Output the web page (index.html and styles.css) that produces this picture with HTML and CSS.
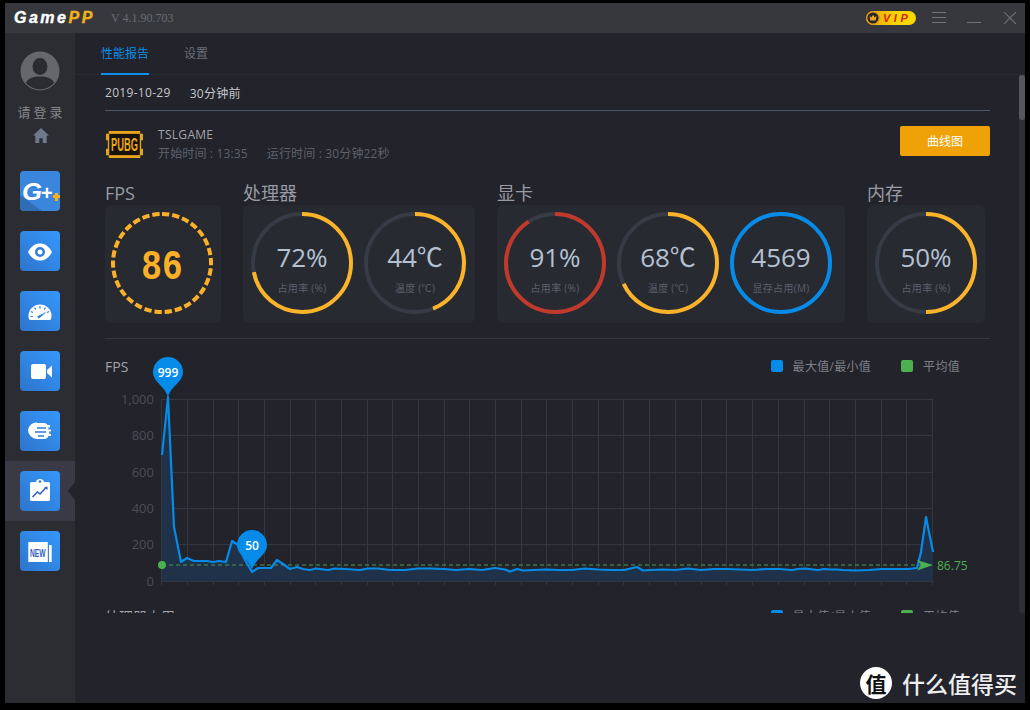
FILE: index.html
```html
<!DOCTYPE html>
<html lang="zh">
<head>
<meta charset="utf-8">
<title>GamePP</title>
<link rel="stylesheet" href="styles.css">
</head>
<body>
<div class="window">
  <header class="titlebar">
    <div class="logo">Game<span class="logo-pp">PP</span></div>
    <div class="version">V 4.1.90.703</div>
    <div class="title-actions">
      <div class="vip">
        <svg class="vip-crown" viewBox="0 0 14 14"><circle cx="7" cy="7" r="6.200" fill="#26262c" stroke="#e8a313" stroke-width="1.200"/><path d="M3.600 4.800l1.800 1.600L7 3.800l1.600 2.600 1.800-1.600-.7 4.600H4.300z" fill="#f2a91a"/></svg>
        <span class="vip-text">VIP</span>
      </div>
      <svg class="ctl ctl-menu" viewBox="0 0 14 12"><path d="M0 .5h14M0 5.500h14M0 10.500h14" stroke="#70737c" fill="none"/></svg>
      <svg class="ctl ctl-min" viewBox="0 0 14 12"><path d="M0 10.500h14" stroke="#70737c" fill="none"/></svg>
      <svg class="ctl ctl-close" viewBox="0 0 12 12"><path d="M0 0l12 12M12 0L0 12" stroke="#70737c" stroke-width="1.100" fill="none"/></svg>
    </div>
  </header>
  <div class="body">
    <aside class="sidebar">
      <div class="user">
        <svg class="avatar" viewBox="0 0 40 40"><defs><clipPath id="av"><circle cx="20" cy="20" r="18.500"/></clipPath></defs><circle cx="20" cy="20" r="19.500" fill="#66676b"/><g clip-path="url(#av)" fill="#2b2c31"><ellipse cx="20" cy="15.500" rx="7.500" ry="8.500"/><path d="M5 36c0-8 7-10.500 15-10.500S35 28 35 36v4H5z"/></g></svg>
        <div class="login">请登录</div>
        <svg class="home" viewBox="0 0 16 15"><path d="M8 0L0 7.500h2.300V15h4v-4.800h3.400V15h4V7.500H16z" fill="#6e7a8c"/></svg>
      </div>
      <nav class="nav">
        <div class="nav-row"><div class="nav-icon nav-icon-g">
          <svg viewBox="0 0 40 40"><path d="M0 24L22 40H4a4 4 0 0 1-4-4z" fill="#2f6db5"/><text class="nav-g" x="2" y="29" textLength="20" lengthAdjust="spacingAndGlyphs">G</text><text class="nav-plus" x="21" y="29">+</text><path d="M35 22h3v2h2v3h-2v3h-3v-3h-2v-3h2z" fill="#f7b21b"/></svg>
        </div></div>
        <div class="nav-row"><div class="nav-icon">
          <svg viewBox="0 0 40 40"><path d="M8 21c3-6 7.500-8.500 12-8.500S29 15 32 21c-3 6-7.500 8.500-12 8.500S11 27 8 21z" fill="#fff"/><circle cx="20" cy="21" r="5" fill="#2d7fdc"/><circle cx="20" cy="21" r="2.500" fill="#fff"/></svg>
        </div></div>
        <div class="nav-row"><div class="nav-icon">
          <svg viewBox="0 0 40 40"><path d="M8.500 25a11.500 11.500 0 0 1 23 0c0 2-.5 4-2 4h-19c-1.500 0-2-2-2-4z" fill="#fff"/><path d="M20 15v2.500M14.500 16.500l1.200 2M25.500 16.500l-1.200 2M10.800 20.500l2.200 1M29.200 20.500l-2.200 1M10.500 25.500h2.500" stroke="#2d7fdc" stroke-width="1.200"/><path d="M17 25.500l10-5-8 7z" fill="#2d7fdc"/></svg>
        </div></div>
        <div class="nav-row"><div class="nav-icon">
          <svg viewBox="0 0 40 40"><rect x="11" y="13" width="15" height="15" rx="2" fill="#fff"/><path d="M27 19l5-4.500v12L27 22z" fill="#fff"/></svg>
        </div></div>
        <div class="nav-row"><div class="nav-icon">
          <svg viewBox="0 0 40 40"><path d="M17 12h7a4 4 0 0 1 3.500 2H30v2.500h-2l.5 2H31v2h-2l.5 2.500H31v2h-2.500a4 4 0 0 1-3.500 3h-8a9 9 0 0 1-9-9 8.500 8.500 0 0 1 9-7.500z" fill="#fff"/><path d="M17 17h9M15 21h11M18 25h6" stroke="#2d7fdc" stroke-width="1.300"/></svg>
        </div></div>
        <div class="nav-row nav-row-active"><div class="nav-icon">
          <svg viewBox="0 0 40 40"><rect x="10" y="11" width="20" height="19" rx="1.500" fill="#fff"/><path d="M16 11.500c0-2 1.500-3.500 4-3.500s4 1.500 4 3.500v1.500h-8z" fill="#fff"/><circle cx="20" cy="10.500" r="1.300" fill="#2d7fdc"/><path d="M12.500 26l5-5 2.500 2 6-6.500" stroke="#2f5fc0" stroke-width="1.500" fill="none"/><path d="M27.500 15.500v3.500l-3.300-2.700z" fill="#2f5fc0"/></svg>
        </div><span class="nav-notch"></span></div>
        <div class="nav-row"><div class="nav-icon">
          <svg viewBox="0 0 40 40"><rect x="8.300" y="11" width="19.500" height="20" fill="#fff"/><rect x="29" y="14" width="2.700" height="17" fill="#fff"/><text class="nav-new" x="10" y="25.500" textLength="15.500" lengthAdjust="spacingAndGlyphs">NEW</text></svg>
        </div></div>
      </nav>
    </aside>
    <main class="main">
      <div class="tabs">
        <div class="tab tab-active">性能报告</div>
        <div class="tab">设置</div>
      </div>
      <div class="scroll-wrap">
        <div class="content">
          <div class="date-row"><span>2019-10-29</span><span>30分钟前</span></div>
          <div class="game-row">
            <svg class="pubg" viewBox="0 0 40 29">
              <path d="M3 0h34v3h3v7h-2v9h2v7h-3v3H3v-3H0v-7h2v-9H0V3h3z" fill="#e6a51e"/>
              <rect x="3.500" y="3" width="33" height="23" fill="#17130a"/>
              <text class="pubg-text" x="5.500" y="22" textLength="29" lengthAdjust="spacingAndGlyphs">PUBG</text>
            </svg>
            <div class="game-info">
              <div class="game-name">TSLGAME</div>
              <div class="game-meta"><span>开始时间 : 13:35</span><span>运行时间 : 30分钟22秒</span></div>
            </div>
            <button class="btn-curve">曲线图</button>
          </div>
          <div class="stats">
            <section class="stat stat-fps">
              <h2 class="stat-title">FPS</h2>
              <div class="card">
                <div class="ring">
                  <svg viewBox="0 0 102 102"><circle class="ring-dash" cx="51" cy="51" r="49"/></svg>
                  <div class="ring-fps">86</div>
                </div>
              </div>
            </section>
            <section class="stat stat-cpu">
              <h2 class="stat-title">处理器</h2>
              <div class="card">
                <div class="ring">
                  <svg viewBox="0 0 102 102"><circle class="ring-track" cx="51" cy="51" r="49"/><circle class="ring-bar bar-amber" cx="51" cy="51" r="49" pathLength="100" stroke-dasharray="72 100"/></svg>
                  <div class="ring-text"><div class="ring-value">72%</div><div class="ring-label">占用率 (%)</div></div>
                </div>
                <div class="ring">
                  <svg viewBox="0 0 102 102"><circle class="ring-track" cx="51" cy="51" r="49"/><circle class="ring-bar bar-amber" cx="51" cy="51" r="49" pathLength="100" stroke-dasharray="44 100"/></svg>
                  <div class="ring-text"><div class="ring-value">44℃</div><div class="ring-label">温度 (℃)</div></div>
                </div>
              </div>
            </section>
            <section class="stat stat-gpu">
              <h2 class="stat-title">显卡</h2>
              <div class="card">
                <div class="ring">
                  <svg viewBox="0 0 102 102"><circle class="ring-track" cx="51" cy="51" r="49"/><circle class="ring-bar bar-red" cx="51" cy="51" r="49" pathLength="100" stroke-dasharray="91 100"/></svg>
                  <div class="ring-text"><div class="ring-value">91%</div><div class="ring-label">占用率 (%)</div></div>
                </div>
                <div class="ring">
                  <svg viewBox="0 0 102 102"><circle class="ring-track" cx="51" cy="51" r="49"/><circle class="ring-bar bar-amber" cx="51" cy="51" r="49" pathLength="100" stroke-dasharray="68 100"/></svg>
                  <div class="ring-text"><div class="ring-value">68℃</div><div class="ring-label">温度 (℃)</div></div>
                </div>
                <div class="ring">
                  <svg viewBox="0 0 102 102"><circle class="ring-track" cx="51" cy="51" r="49"/><circle class="ring-bar bar-blue" cx="51" cy="51" r="49" pathLength="100" stroke-dasharray="100 100"/></svg>
                  <div class="ring-text"><div class="ring-value">4569</div><div class="ring-label">显存占用(M)</div></div>
                </div>
              </div>
            </section>
            <section class="stat stat-mem">
              <h2 class="stat-title">内存</h2>
              <div class="card">
                <div class="ring">
                  <svg viewBox="0 0 102 102"><circle class="ring-track" cx="51" cy="51" r="49"/><circle class="ring-bar bar-amber" cx="51" cy="51" r="49" pathLength="100" stroke-dasharray="50 100"/></svg>
                  <div class="ring-text"><div class="ring-value">50%</div><div class="ring-label">占用率 (%)</div></div>
                </div>
              </div>
            </section>
          </div>
          <div class="divider"></div>
          <section class="chart">
            <div class="chart-head">
              <div class="chart-title">FPS</div>
              <div class="legend">
                <div class="legend-item"><i class="sw sw-blue"></i>最大值/最小值</div>
                <div class="legend-item"><i class="sw sw-green"></i>平均值</div>
              </div>
            </div>
            <svg class="chart-svg" viewBox="105 357 885 250">
              <path class="grid" d="M161.500 399V585M187.500 399V585M213.500 399V585M238.500 399V585M264.500 399V585M290.500 399V585M315.500 399V585M341.500 399V585M367.500 399V585M392.500 399V585M418.500 399V585M444.500 399V585M469.500 399V585M495.500 399V585M521.500 399V585M546.500 399V585M572.500 399V585M598.500 399V585M623.500 399V585M649.500 399V585M675.500 399V585M701.500 399V585M726.500 399V585M752.500 399V585M778.500 399V585M804.500 399V585M829.500 399V585M855.500 399V585M881.500 399V585M906.500 399V585M932.500 399V585M161 399.500H933M161 435.500H933M161 472.500H933M161 508.500H933M161 544.500H933M161 581.500H933"/>
              <text class="y-label" x="154" y="404">1,000</text>
              <text class="y-label" x="154" y="440">800</text>
              <text class="y-label" x="154" y="477">600</text>
              <text class="y-label" x="154" y="513">400</text>
              <text class="y-label" x="154" y="549">200</text>
              <text class="y-label" x="154" y="586">0</text>
              <path class="area" d="M162 581V455L168 397L174 527L181 562L187 558L194 561L207 561L213 562L219 561L226 562L232 541L238 545L245 560L252 572L258 568L271 568L277 560L283 564L290 569L297 567L303 569L310 570L316 568.500L328 570L335 568.500L345 569L360 570L368 568.500L378 568.500L390 570L405 570L418 568.500L431 568.500L444 569L456 570L469 569L482 570L495 568L505 569.500L510 571.500L517 569L523 570.500L534 570L546 569.500L559 570L572 570L585 568.500L598 569.500L611 570L624 570L637 567L643 570.500L650 570L663 569.500L675 570L688 568.500L701 570L714 569L727 569L740 569.500L753 570L766 569L779 569L792 570L798 569L805 568.500L818 570L824 569L831 569.500L837 569.500L843 570L856 570.500L869 570L882 569L895 569L908 569L917 568L921 552L926 517L933 552V581Z"/>
              <path class="avg" d="M162 565H932"/>
              <path class="line" d="M162 455L168 397L174 527L181 562L187 558L194 561L207 561L213 562L219 561L226 562L232 541L238 545L245 560L252 572L258 568L271 568L277 560L283 564L290 569L297 567L303 569L310 570L316 568.500L328 570L335 568.500L345 569L360 570L368 568.500L378 568.500L390 570L405 570L418 568.500L431 568.500L444 569L456 570L469 569L482 570L495 568L505 569.500L510 571.500L517 569L523 570.500L534 570L546 569.500L559 570L572 570L585 568.500L598 569.500L611 570L624 570L637 567L643 570.500L650 570L663 569.500L675 570L688 568.500L701 570L714 569L727 569L740 569.500L753 570L766 569L779 569L792 570L798 569L805 568.500L818 570L824 569L831 569.500L837 569.500L843 570L856 570.500L869 570L882 569L895 569L908 569L917 568L921 552L926 517L933 552"/>
              <circle class="avg-dot" cx="162" cy="565" r="4"/>
              <path class="avg-dot" d="M917 560L933 565L917 570.500L921 565Z"/>
              <text class="avg-label" x="937" y="570">86.75</text>
              <path class="pin" d="M168 397C165 386 153 382 153 372a15 15 0 0 1 30 0C183 382 171 386 168 397Z"/>
              <text class="pin-text" x="168" y="377">999</text>
              <path class="pin" d="M252 570C249 559 237 555 237 545a15 15 0 0 1 30 0C267 555 255 559 252 570Z"/>
              <text class="pin-text" x="252" y="550">50</text>
            </svg>
          </section>
          <section class="chart">
            <div class="chart-head">
              <div class="chart-title">处理器占用</div>
              <div class="legend">
                <div class="legend-item"><i class="sw sw-blue"></i>最大值/最小值</div>
                <div class="legend-item"><i class="sw sw-green"></i>平均值</div>
              </div>
            </div>
          </section>
        </div>
        <div class="scrollbar"><div class="scroll-thumb"></div></div>
      </div>
    </main>
  </div>
  <div class="watermark">
    <span class="wm-badge">值</span>
    <span class="wm-text">什么值得买</span>
  </div>
</div>
</body>
</html>
```

FILE: styles.css
```css
* { box-sizing: border-box; }
html, body { margin: 0; padding: 0; height: 100%; background: #000; overflow: hidden; }
body {
  padding: 3px 5px;
  font-family: "Open Sans", "Noto Sans CJK SC", sans-serif;
  color: #c5c7cc;
}
.window {
  position: relative;
  width: 1020px;
  height: 700px;
  display: flex;
  flex-direction: column;
  background: #22232b;
}

/* title bar */
.titlebar {
  height: 30px;
  flex: none;
  display: flex;
  align-items: center;
  padding-left: 9px;
  background: #36383e;
}
.logo {
  width: 97px;
  font: italic 700 16px "Liberation Sans", sans-serif;
  letter-spacing: 2.500px;
  -webkit-text-stroke: .4px currentColor;
  color: #fff;
}
.logo-pp { color: #f4b01e; }
.version {
  font: 12px "Liberation Serif", serif;
  color: #686c75;
}
.title-actions {
  margin-left: auto;
  display: flex;
  align-items: center;
  padding-right: 9px;
}
.vip {
  width: 50px;
  height: 14px;
  border-radius: 7px;
  display: flex;
  align-items: center;
  background: linear-gradient(90deg, #e89a10, #f5d800 60%);
}
.vip-crown { width: 14px; height: 14px; flex: none; }
.vip-text {
  margin-left: 3px;
  font: italic 700 11px "Liberation Sans", sans-serif;
  letter-spacing: 3.500px;
  color: #d8231a;
}
.ctl { flex: none; }
.ctl-menu { width: 14px; height: 12px; margin-left: 16px; }
.ctl-min { width: 14px; height: 12px; margin-left: 21px; }
.ctl-close { width: 12px; height: 12px; margin-left: 23px; }

.body { flex: 1; display: flex; min-height: 0; }

/* sidebar */
.sidebar { width: 70px; flex: none; background: #2c2d33; }
.user {
  height: 128px;
  padding-top: 18px;
  display: flex;
  flex-direction: column;
  align-items: center;
}
.avatar { width: 40px; height: 40px; display: block; }
.login {
  margin-top: 12px;
  font-size: 13px;
  line-height: 18px;
  letter-spacing: 3px;
  padding-left: 3px;
  color: #85878d;
}
.home { width: 16px; height: 15px; margin: 7px 0 0 1px; display: block; }
.nav-row {
  position: relative;
  height: 60px;
  display: flex;
  align-items: center;
  justify-content: center;
}
.nav-row-active { background: #3a3a46; }
.nav-notch {
  position: absolute;
  right: 0;
  top: 21px;
  border-style: solid;
  border-width: 9px 7px 9px 0;
  border-color: transparent #22232b transparent transparent;
}
.nav-icon {
  width: 40px;
  height: 40px;
  border-radius: 4px;
  overflow: hidden;
  background: linear-gradient(45deg, #2d75cc, #3597fb);
}
.nav-icon svg { display: block; width: 40px; height: 40px; }
.nav-icon-g { background: #3a86dc; }
.nav-g { font: italic 700 23px "Liberation Sans", sans-serif; fill: #fff; }
.nav-plus { font: 700 20px "Liberation Sans", sans-serif; fill: #fff; }
.nav-new { font: 700 11px "Liberation Sans", sans-serif; fill: #2f5fc0; }

/* main */
.main { flex: 1; min-width: 0; display: flex; flex-direction: column; }
.tabs {
  height: 42px;
  flex: none;
  display: flex;
  gap: 35px;
  padding-left: 26px;
  border-bottom: 1px solid #2a2b33;
}
.tab {
  height: 42px;
  padding-top: 11px;
  font-size: 12px;
  line-height: 20px;
  color: #6c6f78;
}
.tab-active { color: #0c8fe8; border-bottom: 2px solid #0c8fe8; }
.scroll-wrap {
  height: 538px;
  flex: none;
  display: flex;
}
.content {
  width: 944px;
  padding: 0 29px 0 30px;
  overflow: hidden;
}
.scrollbar { width: 6px; background: #2f3036; border-radius: 0 0 3px 3px; }
.scroll-thumb { height: 45px; background: #55575e; border-radius: 3px; }

.date-row {
  height: 36px;
  display: flex;
  gap: 19px;
  align-items: center;
  font-size: 12px;
  letter-spacing: .3px;
  border-bottom: 1px solid #4d5566;
}
.game-row { height: 70px; display: flex; align-items: flex-start; }
.pubg { width: 37px; height: 27px; margin: 20px 0 0 1px; flex: none; }
.pubg-text { font: 700 20px "Liberation Sans", sans-serif; fill: #eda91e; }
.game-info { margin: 15px 0 0 15px; }
.game-name { font-size: 12px; line-height: 18px; letter-spacing: .3px; color: #a2a4aa; }
.game-meta {
  display: flex;
  gap: 19px;
  font-size: 12px;
  line-height: 20px;
  letter-spacing: .15px;
  color: #5f626c;
}
.btn-curve {
  margin: 15px 0 0 auto;
  width: 90px;
  height: 30px;
  border: 0;
  border-radius: 2px;
  background: #eea208;
  color: #fff;
  font: 12px "Open Sans", "Noto Sans CJK SC", sans-serif;
}

/* stats */
.stats { display: flex; gap: 22px; }
.stat { flex: none; }
.stat-fps { width: 116px; }
.stat-cpu { width: 232px; }
.stat-gpu { width: 348px; }
.stat-mem { width: 118px; }
.stat-title {
  margin: 0;
  height: 24px;
  font-size: 18px;
  font-weight: 400;
  line-height: 24px;
  color: #989ba3;
}
.card {
  height: 118px;
  padding: 0 0 2px 8px;
  display: flex;
  gap: 11px;
  align-items: center;
  background: #282a31;
  border-radius: 6px;
}
.stat-fps .card { padding-left: 6px; }
.stat-gpu .card { padding-left: 7px; }
.ring { position: relative; width: 102px; height: 102px; flex: none; }
.ring svg { display: block; width: 102px; height: 102px; transform: rotate(-90deg); }
.ring-track, .ring-bar, .ring-dash { fill: none; stroke-width: 4; }
.ring-track { stroke: #363b45; }
.ring-dash { stroke: #fbb02a; stroke-dasharray: 7.300 2.963; }
.bar-amber { stroke: #fbb32a; }
.bar-red { stroke: #c0392b; }
.bar-blue { stroke: #068ce8; }
.ring-text {
  position: absolute;
  left: 0;
  right: 0;
  top: 28px;
  text-align: center;
}
.ring-value { font-size: 26px; line-height: 34px; color: #b4c1d2; }
.ring-label { margin-top: 7px; font-size: 10px; line-height: 14px; letter-spacing: .3px; color: #5b5f6b; }
.ring-fps {
  position: absolute;
  left: 0;
  right: 0;
  top: 26px;
  text-align: center;
  font: 700 43px/60px "Liberation Mono", monospace;
  color: #fbb02a;
  transform: scaleX(.8);
}
.divider { height: 1px; margin-top: 15px; background: #35373f; }

/* chart */
.chart { height: 250px; }
.divider + .chart { margin-top: 18px; }
.chart-head { height: 20px; display: flex; align-items: center; justify-content: space-between; }
.chart-title { font-size: 14px; line-height: 20px; color: #a2a4aa; }
.legend { display: flex; gap: 30px; padding-right: 30px; margin-top: -2px; }
.legend-item { display: flex; align-items: center; gap: 10px; font-size: 12px; letter-spacing: .3px; color: #7f8188; }
.sw { width: 12px; height: 12px; border-radius: 2px; display: block; margin-top: -1px; }
.sw-blue { background: #068ce8; }
.sw-green { background: #4cb050; }
.chart-svg { display: block; width: 885px; height: 250px; margin-top: -20px; overflow: visible; }
.grid { stroke: #343640; stroke-width: 1; fill: none; }
.y-label { font-size: 13px; fill: #4c4e57; text-anchor: end; }
.area { fill: #1f3249; }
.line { fill: none; stroke: #068ce8; stroke-width: 2.200; stroke-linejoin: round; }
.avg { stroke: #4c9a50; stroke-dasharray: 4 3; fill: none; }
.avg-dot { fill: #4cb050; }
.avg-label { font-size: 12px; fill: #4cb050; }
.pin { fill: #068ce8; }
.pin-text { font-size: 12px; font-weight: 600; fill: #fff; text-anchor: middle; }

/* watermark */
.watermark {
  position: absolute;
  right: 8px;
  bottom: 4px;
  display: flex;
  align-items: center;
  gap: 10px;
}
.wm-badge {
  width: 32px;
  height: 32px;
  border-radius: 50%;
  background: #fff;
  color: #111;
  font: 700 21px/32px "Noto Sans CJK SC", sans-serif;
  text-align: center;
}
.wm-text { font: 500 23px/32px "Noto Sans CJK SC", sans-serif; color: #eee; }
```
